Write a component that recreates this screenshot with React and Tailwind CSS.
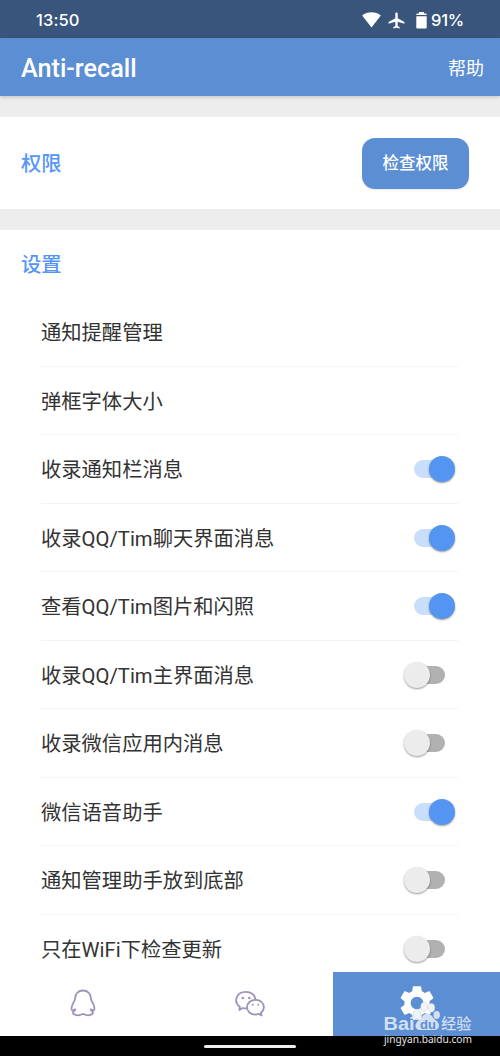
import React from 'react';
import { MdSettings, MdAirplanemodeActive } from 'react-icons/md';
import { clsx } from 'clsx';

const settings = [
  { label: '通知提醒管理' },
  { label: '弹框字体大小' },
  { label: '收录通知栏消息', on: true },
  { label: '收录QQ/Tim聊天界面消息', on: true },
  { label: '查看QQ/Tim图片和闪照', on: true },
  { label: '收录QQ/Tim主界面消息', on: false },
  { label: '收录微信应用内消息', on: false },
  { label: '微信语音助手', on: true },
  { label: '通知管理助手放到底部', on: false },
  { label: '只在WiFi下检查更新', on: false },
];

function StatusBar() {
  return (
    <div className="h-[38px] shrink-0 bg-[#39557c] flex items-center justify-between pl-9 pr-[36px] pt-[2px] text-white font-['Inter',sans-serif] text-[16.5px] font-medium">
      <span className="tracking-[0.1px]">13:50</span>
      <div className="flex items-center">
        <svg width="19" height="16" viewBox="0 0 19 16" fill="currentColor">
          <path d="M0.2 3.6Q4.2 0.3 9.5 0.3T18.8 3.6L9.5 15.5Z" />
        </svg>
        <MdAirplanemodeActive size={19} className="ml-[6px]" />
        <svg width="11" height="17" viewBox="0 0 11 17" fill="currentColor" className="ml-[10px]">
          <path d="M3 0H8V1.5H3ZM1.3 1.5H9.7Q10.7 1.5 10.7 2.5V3H0.3V2.5Q0.3 1.5 1.3 1.5ZM0.3 4.3H10.7V15.5Q10.7 16.5 9.7 16.5H1.3Q0.3 16.5 0.3 15.5Z" />
        </svg>
        <span className="ml-[4px] w-[33px] tracking-[-0.2px]">91%</span>
      </div>
    </div>
  );
}

function Toggle({ on }) {
  return (
    <div className={clsx('relative w-[41px] h-[26px] flex items-center', on ? 'justify-end' : 'justify-start mr-[10px]')}>
      <div className={clsx('absolute top-[4px] h-[18px] w-[36px] rounded-full', on ? 'left-0 bg-[#c8defb]' : 'right-0 bg-[#b1b1b1]')} />
      <div className={clsx('relative size-[26px] rounded-full shadow-[0_1px_2px_rgba(0,0,0,0.4)]', on ? 'bg-[#5595f2]' : 'bg-[#ececec]')} />
    </div>
  );
}

function SettingRow({ label, on }) {
  return (
    <div className="h-[68.5px] shrink-0 flex items-center justify-between border-b border-[#f4f4f4] pr-[3px] pt-px">
      <span className="text-[20.3px] text-[#333] pt-[2px]">{label}</span>
      {on !== undefined && <Toggle on={on} />}
    </div>
  );
}

function QQIcon() {
  return (
    <svg width="26" height="28" viewBox="0 0 26 28" fill="none" stroke="#9f94b8" strokeWidth="1.8" strokeLinecap="round" strokeLinejoin="round">
      <path d="M13 1.5C8.5 1.5 5.2 4.7 5.1 9.2C5 11.6 4.2 12.4 3.1 14.4C1.3 17.6 1 21.2 2.2 21.5L5.2 20.4C5.4 21.6 4.4 21.8 3.4 22.6C2 25 4.8 26.3 7.8 26.3C10.4 26.3 11.7 25 13 25S15.6 26.3 18.2 26.3C21.2 26.3 24 25 22.6 22.6C21.6 21.8 20.6 21.6 20.8 20.4L23.8 21.5C25 21.2 24.7 17.6 22.9 14.4C21.8 12.4 21 11.6 20.9 9.2C20.8 4.7 17.5 1.5 13 1.5Z" />
    </svg>
  );
}

function WeChatIcon() {
  return (
    <svg width="30" height="28" viewBox="0 0 30 28" fill="none" stroke="#9f94b8" strokeWidth="1.8" strokeLinecap="round" strokeLinejoin="round">
      <path d="M12 18.4C10.3 18.6 9 18.4 7.6 18L4.4 20L4.8 16.8C-2 11.8 1.4 1.8 10.8 1.8C16.2 1.8 20.1 5 20.5 9.6" />
      <path d="M20.4 9.8C15.7 9.8 12 13.1 12 17.3S15.7 24.6 20.4 24.6C21.7 24.6 22.7 24.4 23.8 23.9L26.6 25.5L26 22.5C31.8 17.9 28 9.8 20.4 9.8Z" />
      <g fill="#9f94b8" stroke="none">
        <circle cx="7.8" cy="8" r="1.3" />
        <circle cx="14.3" cy="8" r="1.3" />
        <circle cx="17.8" cy="14.8" r="1" />
        <circle cx="23.2" cy="14.8" r="1" />
      </g>
    </svg>
  );
}

function Watermark() {
  return (
    <svg width="92" height="50" viewBox="0 0 92 50" className="absolute left-[383px] top-[1000px]">
      <g fill="#d3dff3">
        <text x="0.5" y="29.5" fontSize="19" fontWeight="700" fontFamily="Liberation Sans, sans-serif" textLength="31" lengthAdjust="spacingAndGlyphs">Bai</text>
        <g fill="#f0f4fb" stroke="#c9d0dc" strokeWidth="0.6">
          <ellipse cx="34" cy="14" rx="3.6" ry="4.8" />
          <ellipse cx="41" cy="6.8" rx="3.2" ry="4.4" />
          <ellipse cx="48.5" cy="7.8" rx="3.2" ry="4.2" />
        </g>
        <ellipse cx="53.7" cy="15" rx="3.2" ry="4" />
        <path d="M44 13.5C39.5 14 39 18 35.5 20.5C31 24 31.5 30 37 30H51C57 30 57.5 23.5 53 20.5C49.5 18 48.5 13.5 44 13.5Z" />
        <text x="58" y="29" fontSize="15.2" fontWeight="500" fontFamily="Noto Sans CJK SC, sans-serif">经验</text>
      </g>
      <text x="37" y="28.5" fontSize="13" fontWeight="700" fontFamily="Liberation Sans, sans-serif" fill="#5c8ed3">du</text>
      <text x="1" y="42.5" fontSize="10" fontFamily="Noto Sans, sans-serif" fill="#e6e6e6" textLength="88" lengthAdjust="spacingAndGlyphs">jingyan.baidu.com</text>
    </svg>
  );
}

export default function App() {
  return (
    <div className="relative w-[500px] h-[1056px] overflow-hidden flex flex-col bg-[#ededed] font-['Roboto','Noto_Sans_CJK_SC',sans-serif]">
      <StatusBar />
      <header className="relative h-[58px] shrink-0 bg-[#5c8ed3] flex items-center justify-between pl-[21px] pr-[16px] pt-[2px] text-white shadow-[0_1px_4px_rgba(0,0,0,0.2)]">
        <h1 className="text-[25.2px] font-medium pt-[2px]">Anti-recall</h1>
        <span className="text-[18px]">帮助</span>
      </header>

      <section className="mt-[21px] h-[92px] shrink-0 bg-white flex items-center justify-between pl-[21px] pr-[31px]">
        <h2 className="text-[20.3px] font-medium text-[#5595f7] pt-[2px]">权限</h2>
        <button className="w-[107px] h-[51px] rounded-[13px] bg-[#5c8ed3] text-white text-[16.5px] font-medium pt-[2px] shadow-[0_1px_2px_rgba(0,0,0,0.1)]">检查权限</button>
      </section>

      <section className="mt-[21px] flex-1 min-h-0 overflow-hidden bg-white flex flex-col">
        <h2 className="h-[68px] shrink-0 flex items-center pl-[21px] pt-[2px] text-[20.3px] font-medium text-[#5595f7]">设置</h2>
        <div className="flex flex-col ml-[41px] mr-[42px]">
          {settings.map((item) => (
            <SettingRow key={item.label} {...item} />
          ))}
        </div>
      </section>

      <nav className="h-16 shrink-0 grid grid-cols-3 bg-white">
        <div className="flex items-center justify-center pb-[3px]">
          <QQIcon />
        </div>
        <div className="flex items-center justify-center">
          <WeChatIcon />
        </div>
        <div className="flex items-center justify-center bg-[#5c8ed3] text-white pb-[2px]">
          <MdSettings size={42} />
        </div>
      </nav>
      <div className="h-5 shrink-0 bg-black flex items-center justify-center">
        <div className="w-[92px] h-[3px] rounded-full bg-[#eee]" />
      </div>
      <Watermark />
    </div>
  );
}
